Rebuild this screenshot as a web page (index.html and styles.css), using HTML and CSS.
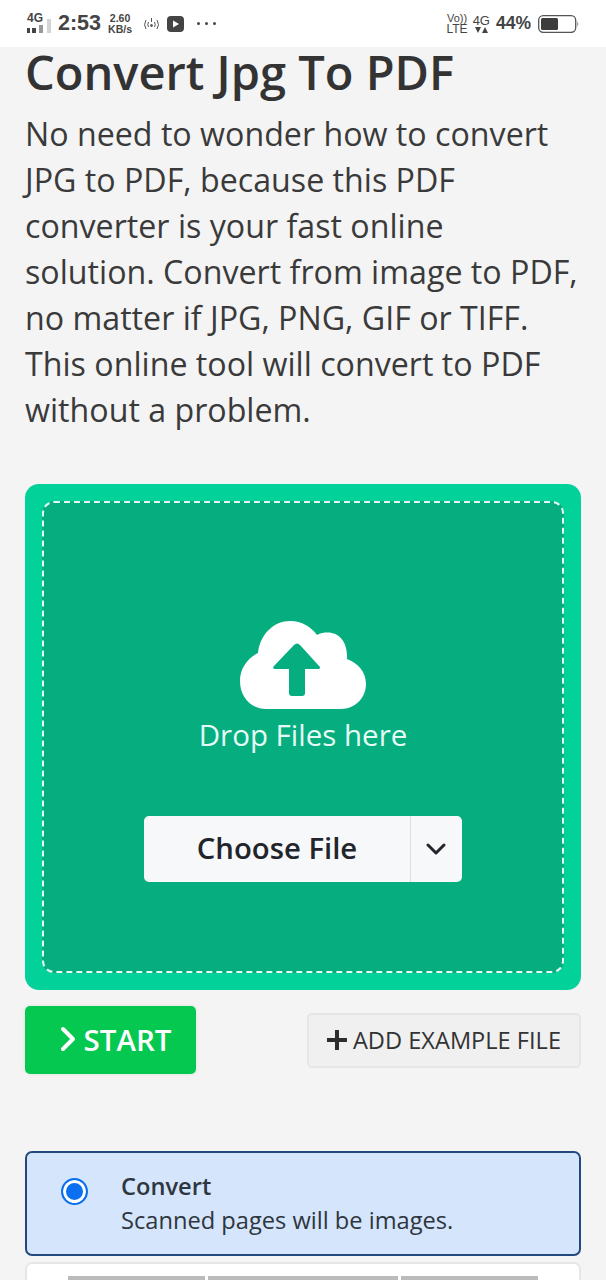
FILE: index.html
```html
<!DOCTYPE html>
<html lang="en">
<head>
    <meta charset="UTF-8">
    <meta name="viewport" content="width=device-width, initial-scale=1.0">
    <title>Convert Jpg To PDF</title>
    <link rel="stylesheet" href="styles.css">
</head>
<body>

<div class="status-bar">
    <div class="status-left">
        <div class="net">
            <span class="net-label">4G</span>
            <svg class="net-bars" width="24" height="15" viewBox="0 0 24 15">
                <rect x="0" y="9" width="3" height="5" fill="#444"/>
                <rect x="5" y="9" width="4" height="5" fill="#444"/>
                <rect x="12" y="6" width="4" height="8" fill="#999"/>
                <rect x="20" y="0" width="4" height="14" fill="#d4d4d4"/>
            </svg>
        </div>
        <span class="clock">2:53</span>
        <div class="speed"><span>2.60</span><span>KB/s</span></div>
        <svg class="hotspot" width="19" height="16" viewBox="0 0 18 16" fill="none" stroke="#555" stroke-width="1">
            <path d="M3.500 4 Q0.500 9 3.500 13"/>
            <path d="M14.500 4 Q17.500 9 14.500 13"/>
            <path d="M6 6 Q4.500 9 6 11"/>
            <path d="M12 6 Q13.500 9 12 11"/>
            <path d="M9 2V6"/>
            <circle cx="9" cy="9.500" r="1" fill="#555"/>
        </svg>
        <svg class="play" width="17" height="16" viewBox="0 0 17 16">
            <rect width="17" height="16" rx="4" fill="#444"/>
            <path d="M6 4.500L12 8L6 11.500Z" fill="#fff"/>
        </svg>
        <div class="dots"><i></i><i></i><i></i></div>
    </div>
    <div class="status-right">
        <div class="volte"><span class="vo">Vo))</span><span>LTE</span></div>
        <div class="net-right">
            <span>4G</span>
            <svg width="13" height="6" viewBox="0 0 13 6">
                <path d="M0 0H6L3 6Z" fill="#444"/>
                <path d="M7 6H13L10 0Z" fill="#444"/>
            </svg>
        </div>
        <span class="percent">44%</span>
        <svg class="battery" width="41" height="18" viewBox="0 0 41 18">
            <rect x="0.700" y="0.700" width="37" height="16.600" rx="4.500" fill="#fff" stroke="#555" stroke-width="1.300"/>
            <rect x="3" y="3" width="17" height="12" rx="1.500" fill="#3d3d3d"/>
            <path d="M39.500 6Q41 9 39.500 12Z" fill="#444"/>
        </svg>
    </div>
</div>

<div class="content">
    <h1>Convert Jpg To PDF</h1>
    <p class="intro">No need to wonder how to convert JPG to PDF, because this PDF converter is your fast online solution. Convert from image to PDF, no matter if JPG, PNG, GIF or TIFF. This online tool will convert to PDF without a problem.</p>

    <div class="dropzone">
        <div class="dropzone-inner">
            <svg class="cloud" width="126" height="88" viewBox="0 0 126 88">
                <path d="M26 88C11 88 0 76 0 60C0 47 8 37 18 32C20 13 34 0 50 0C62 0 71 6 77 14C80 12 84 11.500 88 11.500C99 11.500 108 21 107 38C118 42 126 51 126 63C126 77 115 88 101 88Z" fill="#fff"/>
                <path d="M52 75C50 75 49 74 49 72V48H35C33 48 32.500 46 34 45L54 24C56 22 58 22 60 24L79 45C81 46 80 48 78 48H65V72C65 74 64 75 62 75Z" fill="#05ad7f"/>
            </svg>
            <div class="drop-label">Drop Files here</div>
            <div class="choose">
                <span class="choose-main">Choose File</span>
                <span class="choose-arrow">
                    <svg width="20" height="12" viewBox="0 0 20 12" fill="none" stroke="#22252b" stroke-width="3" stroke-linecap="round" stroke-linejoin="round">
                        <path d="M2 2L10 10L18 2"/>
                    </svg>
                </span>
            </div>
        </div>
    </div>

    <div class="actions">
        <a class="btn-start">
            <svg width="16" height="26" viewBox="0 0 16 26" fill="none" stroke="#fff" stroke-width="4" stroke-linecap="round" stroke-linejoin="round">
                <path d="M3 3L13 13L3 23"/>
            </svg>
            START
        </a>
        <a class="btn-example">
            <svg width="20" height="20" viewBox="0 0 20 20">
                <path d="M8 0H12V8H20V12H12V20H8V12H0V8H8Z" fill="#2c2c2c"/>
            </svg>
            ADD EXAMPLE FILE
        </a>
    </div>

    <div class="option option-active">
        <span class="radio"></span>
        <div class="option-text">
            <strong>Convert</strong>
            <span>Scanned pages will be images.</span>
        </div>
    </div>

    <div class="option option-next">
        <div class="option-bars"><i></i><i></i><i></i></div>
    </div>
</div>

</body>
</html>
```
FILE: styles.css
```css
html, body {
    height: 1280px;
    overflow: hidden;
}

body {
    font-family: "Open Sans", sans-serif;
    background-color: #f4f4f5;
    margin: 0;
    padding: 0;
    color: #333;
}

.status-bar {
    height: 47px;
    background-color: #fff;
    display: flex;
    justify-content: space-between;
    align-items: center;
    padding: 0 27px;
    box-sizing: border-box;
    font-family: "Liberation Sans", sans-serif;
    color: #444;
}

.status-left, .status-right {
    display: flex;
    align-items: center;
}

.net {
    display: flex;
    flex-direction: column;
    width: 31px;
}

.net-label {
    font-size: 12px;
    font-weight: bold;
    line-height: 11px;
}

.net-bars {
    margin-top: -5px;
}

.clock {
    font-size: 21.500px;
    font-weight: bold;
}

.speed {
    display: flex;
    flex-direction: column;
    font-size: 10.500px;
    font-weight: bold;
    line-height: 11px;
    margin-left: 7px;
    text-align: center;
}

.hotspot {
    margin-left: 10px;
}

.play {
    margin-left: 6px;
}

.dots {
    display: flex;
    gap: 5px;
    margin-left: 13px;
}

.dots i {
    width: 3px;
    height: 3px;
    border-radius: 50%;
    background-color: #444;
}

.volte {
    display: flex;
    flex-direction: column;
    align-items: center;
    font-size: 12px;
    line-height: 11px;
}

.vo {
    font-size: 11px;
}

.net-right {
    display: flex;
    flex-direction: column;
    align-items: center;
    font-size: 13px;
    line-height: 13px;
    margin-left: 5px;
}

.percent {
    font-size: 17.500px;
    font-weight: bold;
    margin-left: 6px;
}

.battery {
    margin-left: 7px;
}

.content {
    padding: 0 25px;
}

h1 {
    font-size: 47px;
    font-weight: 600;
    line-height: 50px;
    margin: 0;
}

.intro {
    font-size: 32.200px;
    line-height: 46px;
    margin: 14px 0 51px;
    color: #3a3a3a;
}

.dropzone {
    background-color: #03d19a;
    border-radius: 14px;
    padding: 17px;
}

.dropzone-inner {
    height: 472px;
    box-sizing: border-box;
    background-color: #05ad7f;
    border: 2px dashed #e6f8f2;
    border-radius: 12px;
    padding-top: 118px;
    display: flex;
    flex-direction: column;
    align-items: center;
}

.drop-label {
    font-size: 29.500px;
    line-height: 38px;
    color: #e6fbf5;
    margin-top: 7px;
}

.choose {
    display: flex;
    width: 318px;
    height: 66px;
    margin-top: 62px;
    background-color: #f7f8fa;
    border-radius: 5px;
    color: #22252b;
}

.choose-main {
    flex: 1;
    display: flex;
    align-items: center;
    justify-content: center;
    padding-bottom: 2px;
    font-size: 29.300px;
    font-weight: 600;
    border-right: 1px solid #dcdde0;
}

.choose-arrow {
    width: 51px;
    padding-right: 2px;
    box-sizing: border-box;
    display: flex;
    align-items: center;
    justify-content: center;
}

.actions {
    display: flex;
    justify-content: space-between;
    align-items: center;
    margin-top: 16px;
}

.btn-start {
    width: 171px;
    height: 68px;
    box-sizing: border-box;
    padding: 0 0 2px 10px;
    background-color: #05c850;
    border-radius: 5px;
    color: #fff;
    font-size: 29.500px;
    font-weight: 600;
    display: flex;
    align-items: center;
    justify-content: center;
    gap: 8px;
    box-shadow: 0 0 4px rgba(0, 0, 0, 0.08);
}

.btn-example {
    width: 274px;
    height: 55px;
    box-sizing: border-box;
    background-color: #f0f0f1;
    border: 2px solid #e6e6e8;
    border-radius: 5px;
    font-size: 23.600px;
    color: #333;
    display: flex;
    align-items: center;
    justify-content: center;
    gap: 6px;
}

.option {
    box-sizing: border-box;
    border-radius: 7px;
}

.option-active {
    height: 105px;
    margin-top: 77px;
    background-color: #d5e5fb;
    border: 2px solid #23497f;
    display: flex;
    align-items: flex-start;
    padding: 16px 0 0 34px;
}

.radio {
    width: 27px;
    height: 27px;
    margin-top: 9px;
    box-sizing: border-box;
    border: 2px solid #0a6ff0;
    border-radius: 50%;
    background-color: #0a6ff0;
    box-shadow: inset 0 0 0 3px #fff;
}

.option-text {
    display: flex;
    flex-direction: column;
    margin-left: 33px;
    color: #2e3640;
    font-size: 23.650px;
    line-height: 34px;
}

.option-text strong {
    font-weight: 600;
}

.option-next {
    height: 60px;
    margin-top: 6px;
    background-color: #fff;
    border: 2px solid #e6e6e8;
    padding: 12px 41px 0;
}

.option-bars {
    display: flex;
    gap: 3px;
}

.option-bars i {
    height: 5px;
    background-color: #bbb;
    width: 137px;
}

.option-bars i:nth-child(2) {
    width: 190px;
}
```
